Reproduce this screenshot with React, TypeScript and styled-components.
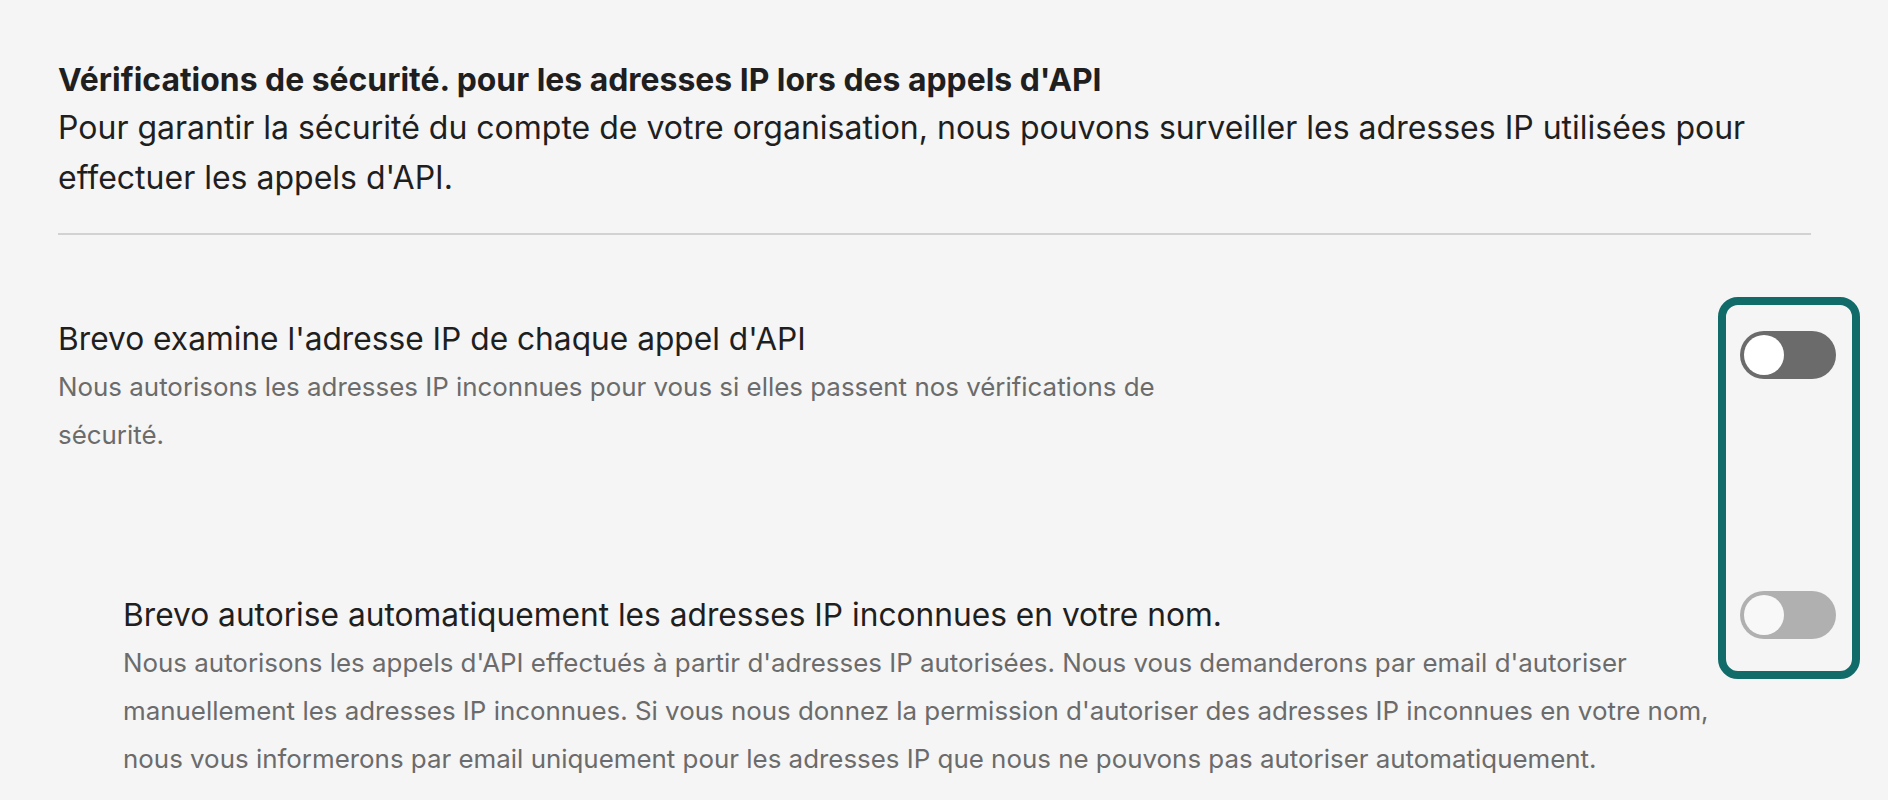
import React from "react";
import styled, { createGlobalStyle } from "styled-components";

const GlobalStyle = createGlobalStyle`
  html, body {
    margin: 0;
    padding: 0;
    background: #f5f5f5;
  }
  body {
    font-family: Inter, "Noto Sans", "Liberation Sans", sans-serif;
    color: #1f1f1f;
  }
`;

const Page = styled.main`
  min-height: 800px;
  padding: 56px 28px 0 58px;
  box-sizing: border-box;
  background: #f5f5f5;
`;

const Header = styled.header`
  margin-right: 49px;
  padding-bottom: 30px;
  border-bottom: 2px solid #d2d2d2;
`;

const Title = styled.h2`
  margin: 0;
  font-size: 31.9px;
  line-height: 47px;
  font-weight: 700;
  color: #1f1f1f;
`;

const Intro = styled.p`
  margin: 0;
  font-size: 32px;
  line-height: 50px;
  font-weight: 400;
  color: #1f1f1f;
`;

const Settings = styled.section`
  display: grid;
  grid-template-columns: 1fr auto;
  align-items: start;
`;

const SettingsList = styled.div`
  display: flex;
  flex-direction: column;
  padding-top: 80px;
`;

const Setting = styled.div<{ $indent?: number; $gap?: number }>`
  display: flex;
  flex-direction: column;
  padding-left: ${(p) => p.$indent ?? 0}px;
  margin-top: ${(p) => p.$gap ?? 0}px;
`;

const SettingName = styled.h3`
  margin: 0;
  font-size: 31.7px;
  line-height: 48px;
  font-weight: 400;
  color: #1f1f1f;
`;

const SettingDesc = styled.p<{ $max: number }>`
  margin: 0;
  max-width: ${(p) => p.$max}px;
  font-size: 25.9px;
  line-height: 48px;
  color: #6b6b6b;
`;

const ToggleRail = styled.div`
  margin-top: 62px;
  width: 142px;
  box-sizing: border-box;
  border: 8px solid #106b69;
  border-radius: 20px;
  padding: 26px 0 32px 14px;
  display: flex;
  flex-direction: column;
  gap: 212px;
`;

const Switch = styled.button<{ $on?: boolean; $muted?: boolean }>`
  width: 96px;
  height: 48px;
  padding: 4px;
  border: none;
  border-radius: 24px;
  background: ${(p) => (p.$muted ? "#b0b0b0" : "#6b6b6b")};
  display: flex;
  align-items: center;
  justify-content: ${(p) => (p.$on ? "flex-end" : "flex-start")};
  cursor: pointer;
  box-sizing: border-box;
`;

const Knob = styled.span<{ $muted?: boolean }>`
  width: 40px;
  height: 40px;
  border-radius: 50%;
  background: ${(p) => (p.$muted ? "#f8f8f8" : "#ffffff")};
  display: block;
`;

export default function App() {
  return (
    <>
      <GlobalStyle />
      <Page>
        <Header>
          <Title>Vérifications de sécurité. pour les adresses IP lors des appels d'API</Title>
          <Intro>
            Pour garantir la sécurité du compte de votre organisation, nous pouvons surveiller les
            adresses IP utilisées pour effectuer les appels d'API.
          </Intro>
        </Header>
        <Settings>
          <SettingsList>
            <Setting>
              <SettingName>Brevo examine l'adresse IP de chaque appel d'API</SettingName>
              <SettingDesc $max={1120}>
                Nous autorisons les adresses IP inconnues pour vous si elles passent nos vérifications de
                sécurité.
              </SettingDesc>
            </Setting>
            <Setting $indent={65} $gap={132}>
              <SettingName>Brevo autorise automatiquement les adresses IP inconnues en votre nom.</SettingName>
              <SettingDesc $max={1610}>
                Nous autorisons les appels d'API effectués à partir d'adresses IP autorisées. Nous vous
                demanderons par email d'autoriser manuellement les adresses IP inconnues. Si vous nous
                donnez la permission d'autoriser des adresses IP inconnues en votre nom, nous vous
                informerons par email uniquement pour les adresses IP que nous ne pouvons pas autoriser
                automatiquement.
              </SettingDesc>
            </Setting>
          </SettingsList>
          <ToggleRail>
            <Switch aria-label="Brevo examine l'adresse IP" role="switch" aria-checked={false}>
              <Knob />
            </Switch>
            <Switch $muted aria-label="Brevo autorise automatiquement" role="switch" aria-checked={false}>
              <Knob $muted />
            </Switch>
          </ToggleRail>
        </Settings>
      </Page>
    </>
  );
}
